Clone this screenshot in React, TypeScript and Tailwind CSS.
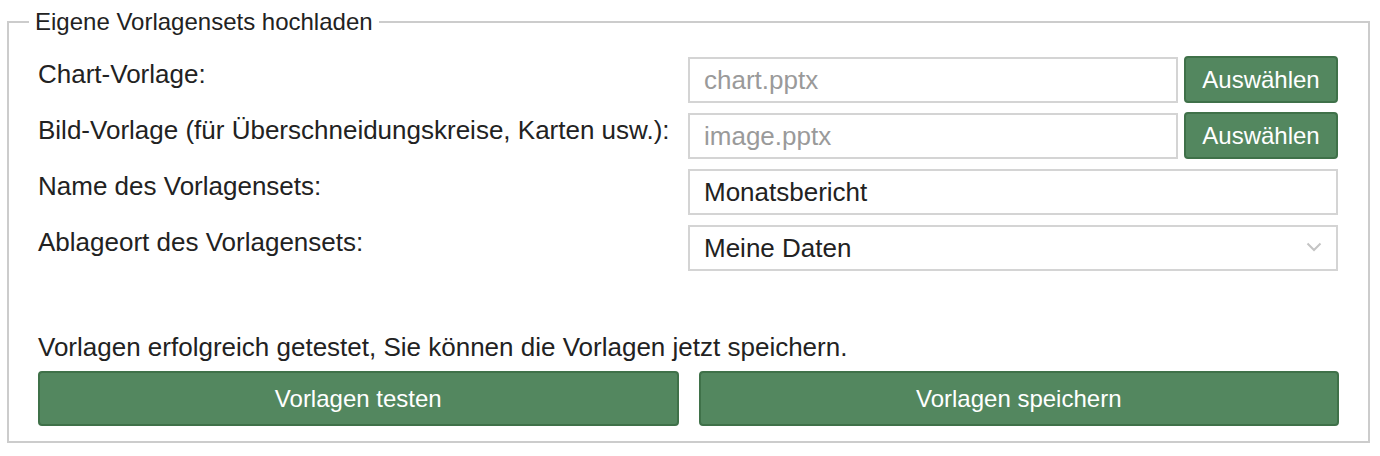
import { useState } from "react";

const font = { fontFamily: '"Liberation Sans", Arial, sans-serif' };

function FileRow({ label, file }: { label: string; file: string }) {
  return (
    <div className="grid grid-cols-[650px_650px]">
      <div className="pt-[2px] text-[26px] leading-[30px] text-[#222]">{label}</div>
      <div className="flex gap-[6px]">
        <input
          readOnly
          placeholder={file}
          className="h-[46px] w-[490px] border-2 border-[#d4d4d4] px-[14px] text-[26px] text-[#222] outline-none placeholder:text-[#9a9a9a]"
        />
        <button className="h-[47px] w-[154px] -mt-px rounded-[4px] border-2 border-[#3f7149] bg-[#53875f] text-[24px] text-white">
          Auswählen
        </button>
      </div>
    </div>
  );
}

export default function App() {
  const [name, setName] = useState("Monatsbericht");

  return (
    <div className="bg-white w-[1380px] h-[456px] pl-[7px] pt-[8px]" style={font}>
      <fieldset className="w-[1363px] h-[435px] border-2 border-[#cccccc] px-[29px] pb-[14px]">
        <legend className="-ml-[9px] px-[6px] text-[24px] leading-[28px] text-[#222]">
          Eigene Vorlagensets hochladen
        </legend>

        <div className="flex flex-col gap-[10px] pt-[21px]">
          <FileRow label="Chart-Vorlage:" file="chart.pptx" />
          <FileRow
            label="Bild-Vorlage (für Überschneidungskreise, Karten usw.):"
            file="image.pptx"
          />
          <div className="grid grid-cols-[650px_650px]">
            <div className="pt-[2px] text-[26px] leading-[30px] text-[#222]">Name des Vorlagensets:</div>
            <input
              value={name}
              onChange={(e) => setName(e.target.value)}
              className="h-[46px] w-[650px] border-2 border-[#d4d4d4] px-[14px] text-[26px] text-[#222] outline-none"
            />
          </div>
          <div className="grid grid-cols-[650px_650px]">
            <div className="pt-[2px] text-[26px] leading-[30px] text-[#222]">Ablageort des Vorlagensets:</div>
            <div className="relative">
              <select className="h-[46px] w-[650px] appearance-none border-2 border-[#d4d4d4] bg-white px-[14px] text-[26px] text-[#222] outline-none">
                <option>Meine Daten</option>
              </select>
              <svg
                className="pointer-events-none absolute right-[16px] top-[17px]"
                width="16"
                height="10"
                viewBox="0 0 16 10"
                fill="none"
              >
                <path d="M1.5 1.5 L8 8 L14.5 1.5" stroke="#c4c4c4" strokeWidth="2" />
              </svg>
            </div>
          </div>
        </div>

        <p className="mt-[61px] text-[26px] leading-[30px] text-[#222]">
          Vorlagen erfolgreich getestet, Sie können die Vorlagen jetzt speichern.
        </p>
        <div className="mt-[9px] grid grid-cols-2 gap-5">
          <button className="h-[55px] rounded-[4px] border-2 border-[#3f7149] bg-[#53875f] text-[24px] text-white">
            Vorlagen testen
          </button>
          <button className="h-[55px] rounded-[4px] border-2 border-[#3f7149] bg-[#53875f] text-[24px] text-white">
            Vorlagen speichern
          </button>
        </div>
      </fieldset>
    </div>
  );
}
